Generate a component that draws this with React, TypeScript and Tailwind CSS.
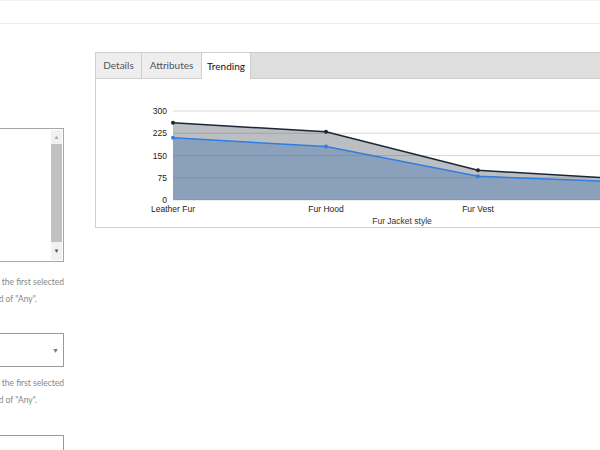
import React from 'react';

const dark = [260, 230, 100, 70];
const blue = [210, 180, 80, 60];
const xs = [173, 326, 478, 631];
const yOf = (v: number) => 200 - (v / 300) * 89;

const line = (vals: number[]) => vals.map((v, i) => `${xs[i]},${yOf(v)}`).join(' ');
const area = (vals: number[]) => `173,200 ${line(vals)} 631,200`;

const TrendChart = () => (
  <svg width="560" height="148" viewBox="96 79 560 148" className="block">
    {[0, 75, 150, 225, 300].map(v => (
      <line key={v} x1={173} x2={656} y1={yOf(v)} y2={yOf(v)} stroke="#d9d9d9" strokeWidth={1} />
    ))}
    <polygon points={area(dark)} fill="rgba(30,40,55,0.3)" />
    <polygon points={area(blue)} fill="rgba(90,130,180,0.5)" />
    <polyline points={line(dark)} fill="none" stroke="#1b2636" strokeWidth={1.5} />
    <polyline points={line(blue)} fill="none" stroke="#2f7fe0" strokeWidth={1.5} />
    {dark.map((v, i) => <circle key={'d' + i} cx={xs[i]} cy={yOf(v)} r={2} fill="#1b2636" />)}
    {blue.map((v, i) => <circle key={'b' + i} cx={xs[i]} cy={yOf(v)} r={2} fill="#2f7fe0" />)}
    <g fontFamily="'Liberation Sans', Arial, sans-serif" fontSize="8.5" fill="#222">
      {[0, 75, 150, 225, 300].map(v => (
        <text key={v} x={167} y={yOf(v) + 3} textAnchor="end">{v}</text>
      ))}
      <text x={173} y={212} textAnchor="middle">Leather Fur</text>
      <text x={326} y={212} textAnchor="middle">Fur Hood</text>
      <text x={478} y={212} textAnchor="middle">Fur Vest</text>
      <text x={402} y={223.5} textAnchor="middle" fill="#3a3030">Fur Jacket style</text>
    </g>
  </svg>
);

const HelpText = () => (
  <div className="text-[8.5px] leading-[17px] text-[#888] whitespace-nowrap">
    <div className="flex justify-end">Hold Ctrl to select multiple. If none is chosen the first selected</div>
    <div className="flex justify-end pr-[27px]">option will be used instead of "Any".</div>
  </div>
);

export default function App() {
  return (
    <div className="w-[600px] h-[450px] overflow-hidden bg-white font-['Lato','Open_Sans',sans-serif]">
      <div className="h-[24px] border-t border-[#f2f2f2] border-b border-b-[#ececec]" />
      <div className="flex items-start">
        <div className="w-[300px] ml-[-236px] shrink-0 mt-[104px]">
          <div className="h-[134px] border border-[#a6a6a6] flex justify-end p-[1px]">
            <div className="w-[11px] bg-[#f1f1f1] flex flex-col items-center">
              <div className="h-[14px] flex items-center text-[6px] text-[#aaa] leading-none">▲</div>
              <div className="w-full flex-1 bg-[#c1c1c1]" />
              <div className="h-[18px] flex items-center text-[6px] text-[#555] leading-none">▼</div>
            </div>
          </div>
          <div className="mt-[12px]">
            <HelpText />
          </div>
          <div className="mt-[25px] h-[34px] border border-[#9a9a9a] flex items-center justify-end pr-[4px] text-[7px] text-[#777]">▼</div>
          <div className="mt-[8px]">
            <HelpText />
          </div>
          <div className="mt-[26px] h-[34px] border border-[#9a9a9a] flex items-end justify-end pr-[4px] text-[7px] text-[#999]">▼</div>
        </div>
        <div className="ml-[31px] mt-[28px] w-[570px] shrink-0 border border-[#cfcfcf]">
          <div className="h-[26px] bg-[#dedede] border-b border-[#d0d0d0] flex text-[10px]">
            <div className="w-[46px] flex items-center justify-center bg-[#eeeeee] text-[#555] border-r border-[#cfcfcf]">Details</div>
            <div className="w-[60px] flex items-center justify-center bg-[#eeeeee] text-[#555] border-r border-[#cfcfcf]">Attributes</div>
            <div className="w-[49px] h-[26px] flex items-center justify-center bg-white text-[#111] border-r border-[#cfcfcf]">Trending</div>
          </div>
          <TrendChart />
        </div>
      </div>
    </div>
  );
}
